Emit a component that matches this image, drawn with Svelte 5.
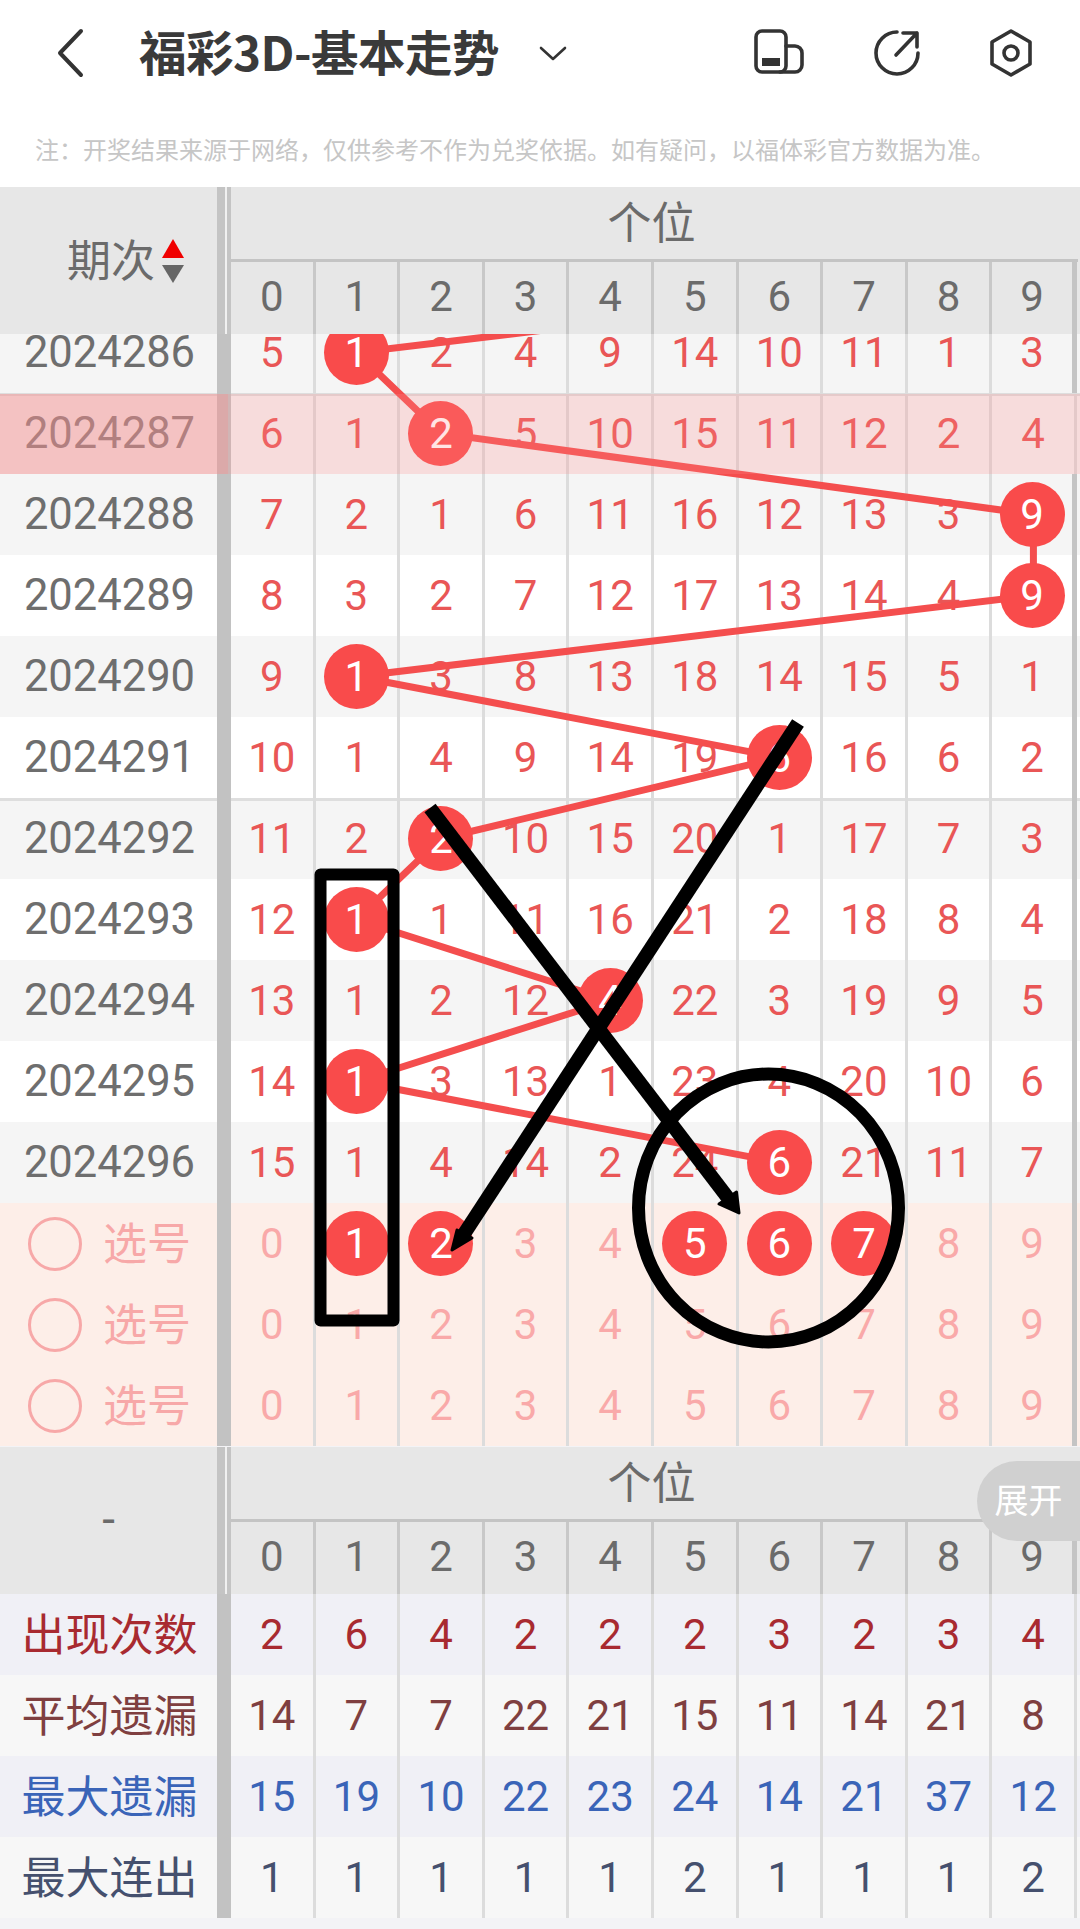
<script>
	const digits = [0, 1, 2, 3, 4, 5, 6, 7, 8, 9];
	const colW = 84.6;
	const colX = (c) => 231 + colW * c + 41;
	const rowH = 81;

	// ball = the digit drawn that period, the rest is the miss count
	const rows = [
		{ id: "2024286", ball: 1, vals: [5, 1, 2, 4, 9, 14, 10, 11, 1, 3] },
		{ id: "2024287", ball: 2, vals: [6, 1, 2, 5, 10, 15, 11, 12, 2, 4], five: true },
		{ id: "2024288", ball: 9, vals: [7, 2, 1, 6, 11, 16, 12, 13, 3, 9] },
		{ id: "2024289", ball: 9, vals: [8, 3, 2, 7, 12, 17, 13, 14, 4, 9], alt: true },
		{ id: "2024290", ball: 1, vals: [9, 1, 3, 8, 13, 18, 14, 15, 5, 1] },
		{ id: "2024291", ball: 6, vals: [10, 1, 4, 9, 14, 19, 6, 16, 6, 2], alt: true },
		{ id: "2024292", ball: 2, vals: [11, 2, 2, 10, 15, 20, 1, 17, 7, 3], five: true },
		{ id: "2024293", ball: 1, vals: [12, 1, 1, 11, 16, 21, 2, 18, 8, 4], alt: true },
		{ id: "2024294", ball: 4, vals: [13, 1, 2, 12, 4, 22, 3, 19, 9, 5] },
		{ id: "2024295", ball: 1, vals: [14, 1, 3, 13, 1, 23, 4, 20, 10, 6], alt: true },
		{ id: "2024296", ball: 6, vals: [15, 1, 4, 14, 2, 24, 6, 21, 11, 7] }
	];

	const picks = [[1, 2, 5, 6, 7], [], []];

	const stats = [
		{ name: "出现次数", cls: "s1", vals: [2, 6, 4, 2, 2, 2, 3, 2, 3, 4] },
		{ name: "平均遗漏", cls: "s2", vals: [14, 7, 7, 22, 21, 15, 11, 14, 21, 8] },
		{ name: "最大遗漏", cls: "s3", vals: [15, 19, 10, 22, 23, 24, 14, 21, 37, 12] },
		{ name: "最大连出", cls: "s4", vals: [1, 1, 1, 1, 1, 2, 1, 1, 1, 2] }
	];

	// trend line, starts one period above the visible rows
	const trend = [`${colX(9)},${-rowH / 2}`]
		.concat(rows.map((r, i) => `${colX(r.ball)},${rowH * i + 40.5}`))
		.join(" ");
</script>

<div class="page">
	<header class="top">
		<svg class="back" width="30" height="50" viewBox="0 0 30 50">
			<path d="M26 3 L5 25 L26 47" />
		</svg>
		<h1>福彩3D-基本走势</h1>
		<svg class="down" width="28" height="15" viewBox="0 0 28 15">
			<path d="M2 2 L14 13 L26 2" />
		</svg>
		<div class="icons">
			<svg width="52" height="48" viewBox="0 0 52 48">
				<rect x="2" y="2" width="30" height="41" rx="6" />
				<path d="M32 17 H41 a7 7 0 0 1 7 7 V36 a7 7 0 0 1 -7 7 H26" />
				<rect class="solid" x="8" y="29" width="18" height="8" />
			</svg>
			<svg width="48" height="48" viewBox="0 0 48 48">
				<path d="M24 3 A21 21 0 1 0 45 24" />
				<path d="M23 26 L44 4 M30 4 H44 V18" />
			</svg>
			<svg width="46" height="48" viewBox="0 0 46 48">
				<path d="M23 2 L42 13 V35 L23 46 L4 35 V13 Z" />
				<circle cx="23" cy="24" r="7" />
			</svg>
		</div>
	</header>

	<p class="note">注：开奖结果来源于网络，仅供参考不作为兑奖依据。如有疑问，以福体彩官方数据为准。</p>

	<div class="head">
		<div class="corner">
			<span class="label">期次</span>
			<span class="sort"><i class="up"></i><i class="dn"></i></span>
		</div>
		<div class="bar"></div>
		<div class="group">
			<div class="title">个位</div>
			<div class="nums">
				{#each digits as d}
					<div class="cell">{d}</div>
				{/each}
			</div>
		</div>
	</div>

	<div class="scroll">
		<div class="rows">
			<svg class="trend" width="1080" height={rowH * 11} viewBox="0 0 1080 {rowH * 11}">
				<polyline points={trend} />
			</svg>

			{#each rows as r, i}
				<div class="row" class:alt={r.alt} class:five={r.five}>
					<div class="period">{r.id}</div>
					<div class="sep"></div>
					{#each r.vals as v, c}
						<div class="cell">
							{#if c === r.ball}
								<span class="ball">{c}</span>
							{:else}
								{v}
							{/if}
						</div>
					{/each}
					{#if i === 1}
						<div class="mark"><div class="mark-l"></div><div class="mark-r"></div></div>
					{/if}
				</div>
			{/each}

			{#each picks as chosen}
				<div class="row pick">
					<div class="period pick-label"><span class="radio"></span><span class="label">选号</span></div>
					<div class="sep"></div>
					{#each digits as d}
						<div class="cell">
							{#if chosen.includes(d)}
								<span class="ball">{d}</span>
							{:else}
								{d}
							{/if}
						</div>
					{/each}
				</div>
			{/each}
		</div>
	</div>

	<div class="foot">
		<div class="head">
			<div class="corner dash">-</div>
			<div class="bar"></div>
			<div class="group">
				<div class="title">个位</div>
				<div class="nums">
					{#each digits as d}
						<div class="cell">{d}</div>
					{/each}
				</div>
			</div>
		</div>
		<button class="expand">展开</button>

		{#each stats as s}
			<div class="row stat {s.cls}">
				<div class="period"><span class="label">{s.name}</span></div>
				<div class="sep"></div>
				{#each s.vals as v}
					<div class="cell">{v}</div>
				{/each}
			</div>
		{/each}
	</div>

	<!-- hand drawn marks on top of the chart -->
	<svg class="ink" width="1080" height="1929" viewBox="0 0 1080 1929">
		<rect x="320.5" y="874.5" width="73" height="446" />
		<ellipse cx="768.5" cy="1208" rx="130" ry="134" />
		<path d="M430 808 L728 1198" />
		<path d="M798 723 L464 1234" />
		<polygon points="739,1213 719,1204 736.5,1192" />
		<polygon points="452,1250 457,1230 472,1238" />
	</svg>
</div>

<style>
	:global(body) {
		margin: 0;
		background: #fff;
	}

	.page {
		position: relative;
		width: 1080px;
		height: 1929px;
		overflow: hidden;
		background: #f3f3f6;
		font-family: Roboto, "Noto Sans CJK SC", sans-serif;
	}

	.top {
		display: flex;
		align-items: center;
		height: 106px;
		background: #fff;
		color: #333;
	}

	.top svg {
		fill: none;
		stroke: #333;
		stroke-width: 4;
		stroke-linecap: round;
		stroke-linejoin: round;
	}

	.back {
		margin-left: 55px;
	}

	h1 {
		margin: 0 0 4px 54px;
		font-family: "Noto Sans CJK SC", sans-serif;
		font-size: 47.5px;
		font-weight: 700;
		line-height: 60px;
		color: #3a3a3a;
		letter-spacing: -0.5px;
	}

	.top .down {
		margin-left: 40px;
		stroke-width: 2.6;
	}

	.icons {
		display: flex;
		align-items: center;
		gap: 67px;
		margin-left: auto;
		margin-right: 46px;
	}

	.top .icons svg {
		stroke-width: 3.6;
	}

	.top .icons .solid {
		fill: #333;
		stroke: none;
	}

	.note {
		margin: 0;
		height: 81px;
		padding: 26px 0 0 35px;
		box-sizing: border-box;
		background: #fff;
		font-family: "Noto Sans CJK SC", sans-serif;
		font-size: 24px;
		line-height: 34px;
		color: #c6c6c6;
		white-space: nowrap;
	}

	.head {
		display: grid;
		grid-template-columns: 217px 14px 847px;
		height: 147px;
		background: #e7e7e7;
		color: #6b6b6b;
	}

	.corner {
		display: flex;
		align-items: center;
		justify-content: flex-end;
		gap: 7px;
		padding: 0 33px 0 0;
		font-family: "Noto Sans CJK SC", sans-serif;
		font-size: 44px;
	}

	.corner.dash {
		justify-content: center;
		padding: 0 0 4px;
		font-family: Roboto, sans-serif;
		font-size: 46px;
	}

	.label {
		font-family: "Noto Sans CJK SC", sans-serif;
		font-size: 44px;
		line-height: 60px;
		position: relative;
		top: -3px;
	}

	.sort {
		display: flex;
		flex-direction: column;
		gap: 7px;
	}

	.sort i {
		display: block;
		width: 0;
		height: 0;
		border-left: 11px solid transparent;
		border-right: 11px solid transparent;
	}

	.sort .up {
		border-bottom: 19px solid #f00000;
	}

	.sort .dn {
		border-top: 18px solid #666;
	}

	.bar {
		border-left: 8px solid #c4c4c4;
		border-right: 4px solid #c4c4c4;
		background: #f0f0f0;
	}

	.title {
		height: 75px;
		border-bottom: 3px solid #c4c4c4;
		box-sizing: border-box;
		padding-right: 6px;
		font-family: "Noto Sans CJK SC", sans-serif;
		font-size: 44px;
		line-height: 66px;
		text-align: center;
	}

	.nums {
		display: grid;
		grid-template-columns: repeat(10, 84.6px);
		height: 72px;
	}

	.cell {
		display: flex;
		align-items: center;
		justify-content: center;
		box-sizing: border-box;
		border-right: 3px solid #dcdcdc;
		font-size: 42px;
	}

	.nums .cell {
		padding-bottom: 4px;
		border-right-color: #c8c8c8;
	}

	.scroll {
		height: 1113px;
		overflow: hidden;
	}

	.rows {
		position: relative;
		margin-top: -22px;
	}

	.trend {
		position: absolute;
		top: 0;
		left: 0;
		z-index: 1;
		overflow: visible;
	}

	.trend polyline {
		fill: none;
		stroke: #f44e4e;
		stroke-width: 7;
	}

	.row {
		position: relative;
		display: grid;
		grid-template-columns: 217px 14px repeat(10, 84.6px);
		box-sizing: border-box;
		height: 81px;
		background: #f5f5f5;
		color: #e95656;
	}

	.row.alt {
		background: #fff;
	}

	.row.five {
		box-shadow: inset 0 3px #dedede;
	}

	.row .cell:last-child,
	.nums .cell:last-child {
		border-right: 5px solid #c4c4c4;
	}

	.period {
		display: flex;
		align-items: center;
		justify-content: center;
		font-size: 43.5px;
		color: #6e6e6e;
		padding-left: 2px;
	}

	.sep {
		background: #c2c2c2;
	}

	.ball {
		position: relative;
		z-index: 2;
		display: flex;
		align-items: center;
		justify-content: center;
		width: 65px;
		height: 65px;
		border-radius: 50%;
		background: #f94b4b;
		color: #fff;
	}

	.mark {
		position: absolute;
		top: 1px;
		left: 0;
		z-index: 3;
		display: flex;
		width: 1080px;
		height: 80px;
	}

	.mark-l {
		width: 228px;
		background: rgba(244, 143, 143, 0.5);
	}

	.mark-r {
		flex: 1;
		background: rgba(255, 139, 139, 0.235);
	}

	.pick {
		background: #fdeee8;
		color: #f9a9a9;
	}

	.pick-label {
		justify-content: flex-start;
		gap: 21px;
		padding-left: 28px;
		color: #f7a8a8;
	}

	.radio {
		box-sizing: border-box;
		width: 54px;
		height: 54px;
		border: 3.5px solid #f7a8a8;
		border-radius: 50%;
	}

	.foot {
		position: relative;
	}

	.expand {
		position: absolute;
		top: 14px;
		right: 0;
		z-index: 2;
		width: 103px;
		height: 80px;
		padding: 0 0 6px 0;
		border: 0;
		border-radius: 40px 0 0 40px;
		background: #d0d0d0;
		color: #fff;
		font-family: "Noto Sans CJK SC", sans-serif;
		font-size: 34px;
	}

	.stat .period {
		padding: 0 0 0 2px;
	}

	.stat.s1,
	.stat.s3 {
		background: #f0f0f6;
	}

	.stat.s2,
	.stat.s4 {
		background: #f7f7f7;
	}

	.s1,
	.s1 .period {
		color: #a82a30;
	}

	.s2,
	.s2 .period {
		color: #7f3f40;
	}

	.s3,
	.s3 .period {
		color: #3a64b8;
	}

	.s4,
	.s4 .period {
		color: #45506e;
	}

	.stat .cell:last-child {
		border-right: 3px solid #dcdcdc;
	}

	.ink {
		position: absolute;
		top: 0;
		left: 0;
		z-index: 5;
		pointer-events: none;
	}

	.ink rect,
	.ink ellipse,
	.ink path {
		fill: none;
		stroke: #000;
		stroke-linejoin: round;
	}

	.ink rect {
		stroke-width: 12;
	}

	.ink ellipse {
		stroke-width: 13;
	}

	.ink path {
		stroke-width: 14;
	}

	.ink polygon {
		fill: #000;
		stroke: #000;
		stroke-width: 3;
		stroke-linejoin: round;
	}
</style>
